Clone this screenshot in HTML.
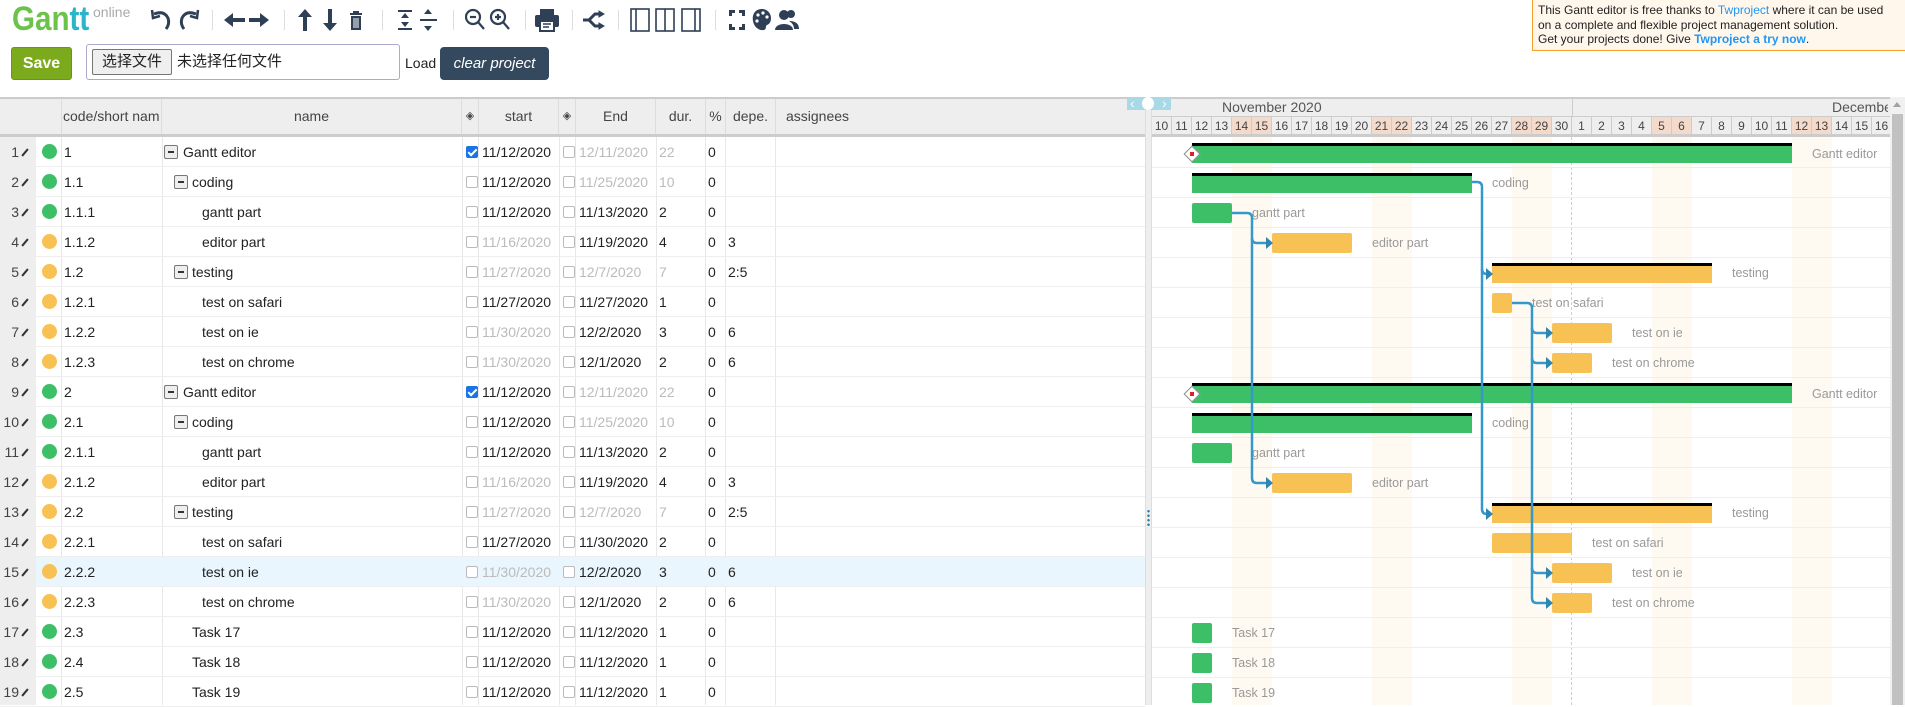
<!DOCTYPE html>
<html><head><meta charset="utf-8">
<style>
*{box-sizing:border-box;margin:0;padding:0}
body{width:1905px;height:705px;overflow:hidden;background:#fff;font-family:"Liberation Sans",Arial,sans-serif;font-size:14px;color:#222;position:relative}
.a{position:absolute}
.ic{position:absolute;top:8px}
.sep{position:absolute;top:10px;width:1px;height:20px;background:#ddd}
.hd{position:absolute;top:97px;height:40px;background:#eee;border-top:2px solid #ccc;border-bottom:3px solid #ccc}
.hc{position:absolute;top:0;height:35px;line-height:35px;color:#444;border-right:1px solid #ddd;text-align:center;white-space:nowrap;overflow:hidden}
.r{position:absolute;left:0;width:1145px;height:30px;border-bottom:1px solid #eee}
.r>span{position:absolute;top:0;line-height:30px;white-space:nowrap}
.n{left:0;width:19px;text-align:right;color:#444}
.pen{position:absolute;left:24px;top:11px;width:2px;height:9px;background:#333;transform:rotate(40deg)}
.dot{position:absolute;left:42px;top:7px;width:15px;height:15px;border-radius:50%}
.g{background:#3dbf67}.o{background:#f8c154}
.vl{position:absolute;top:137px;height:568px;width:1px;background:#e8e8e8}
.cb{position:absolute;top:9px;width:12px;height:12px;border:1px solid #bbb;border-radius:2px;background:#fff}
.cb.on{background:#1a73e8;border-color:#1a73e8}
.cb.on:after{content:"";position:absolute;left:3px;top:0px;width:3px;height:7px;border:solid #fff;border-width:0 2px 2px 0;transform:rotate(45deg)}
.bx{position:absolute;top:8px;width:14px;height:14px;border:1px solid #777;border-radius:2px;background:#eee}
.bx:after{content:"";position:absolute;left:3px;top:5px;width:6px;height:1.5px;background:#333}
.gr{color:#bbb}
.bar{position:absolute;height:20px;border-radius:2px}
.par{position:absolute;height:20px;border-top:3px solid #000}
.lb{position:absolute;color:#999;font-size:12.5px;line-height:20px;white-space:nowrap;margin-top:2px}
.day{position:absolute;top:116px;width:20px;height:18px;border-right:1px solid #ccc;border-top:1px solid #ccc;text-align:center;font-size:12px;line-height:18px;color:#444;background:#eee}
.we{background:#f3dacb}
.stripe{position:absolute;top:137px;width:40px;height:568px;background:#fffaf1}
.gl{position:absolute;left:1152px;width:738px;height:1px;background:#eee}
</style></head><body>

<div class="a" style="left:12px;top:0px;font-size:34px;font-weight:bold;color:#6cc24a;line-height:38px;transform:scaleX(0.87);transform-origin:0 0;white-space:nowrap">Gan<span style="color:#2bb5c8">tt</span></div>
<div class="a" style="left:93px;top:4px;font-size:14px;color:#aaa">online</div>

<svg class="ic" style="left:150px" width="50" height="24" viewBox="0 0 50 24" fill="none" stroke="#2f3f55" stroke-width="3"><path d="M4 6 Q14 2 18 10 Q20 16 16 21"/><path d="M2 2 L3 10 L10 8" stroke-width="2.5"/><path d="M46 6 Q36 2 32 10 Q30 16 34 21"/><path d="M48 2 L47 10 L40 8" stroke-width="2.5"/></svg>
<div class="sep" style="left:212px"></div>
<svg class="ic" style="left:224px" width="46" height="24" viewBox="0 0 46 24" fill="#2f3f55"><path d="M0 12 L9 5 V10 H21 V14 H9 V19Z"/><path d="M45 12 L36 5 V10 H25 V14 H36 V19Z"/></svg>
<div class="sep" style="left:284px"></div>
<svg class="ic" style="left:298px" width="66" height="24" viewBox="0 0 66 24" fill="#2f3f55"><path d="M7 1 L14 9 H9 V23 H5 V9 H0Z"/><path d="M32 23 L25 15 H30 V1 H34 V15 H39Z"/><path d="M52 5 H64 V7 H52Z M55 3 H61 V5 H55Z M53 8 H63 V22 H53Z" /><path d="M56 10 V20 M58 10 V20 M60 10 V20" stroke="#fff" stroke-width="1"/></svg>
<div class="sep" style="left:382px"></div>
<svg class="ic" style="left:398px" width="40" height="24" viewBox="0 0 40 24" fill="#2f3f55"><path d="M0 2 H14 V4 H0Z M0 20 H14 V22 H0Z M7 5 L11 10 H3Z M7 19 L3 14 H11Z"/><path d="M22 11 H39 V13 H22Z M30 1 L26 6 H34 Z M30 23 L26 18 H34Z"/></svg>
<div class="sep" style="left:453px"></div>
<svg class="ic" style="left:465px" width="48" height="26" viewBox="0 0 48 26" fill="none" stroke="#2f3f55" stroke-width="2.2"><circle cx="8" cy="9" r="7"/><path d="M13 14 L19 21"/><path d="M5 9 H11"/><circle cx="33" cy="9" r="7"/><path d="M38 14 L44 21"/><path d="M30 9 H36 M33 6 V12"/></svg>
<div class="sep" style="left:525px"></div>
<svg class="ic" style="left:535px" width="24" height="24" viewBox="0 0 24 24" fill="#2f3f55"><rect x="5" y="1" width="14" height="6"/><rect x="0" y="7" width="24" height="12" rx="2"/><rect x="5" y="13" width="14" height="10" fill="#fff" stroke="#2f3f55" stroke-width="2"/><path d="M8 16 H16 M8 19 H14" stroke="#2f3f55" stroke-width="1.5"/></svg>
<div class="sep" style="left:572px"></div>
<svg class="ic" style="left:583px" width="22" height="24" viewBox="0 0 22 24" fill="none" stroke="#2f3f55" stroke-width="3"><path d="M0 12 H6 L12 6 H18 M6 12 L12 18 H18"/><path d="M16 3 L21 6 L16 9Z M16 15 L21 18 L16 21Z" fill="#2f3f55" stroke-width="1"/></svg>
<div class="sep" style="left:618px"></div>
<svg class="ic" style="left:630px" width="72" height="24" viewBox="0 0 72 24" fill="none" stroke="#2f3f55" stroke-width="1.6"><rect x="1" y="1" width="18" height="22"/><path d="M6 1 V23"/><rect x="26" y="1" width="18" height="22"/><path d="M35 1 V23"/><rect x="52" y="1" width="18" height="22"/><path d="M65 1 V23"/></svg>
<div class="sep" style="left:715px"></div>
<svg class="ic" style="left:728px" width="72" height="24" viewBox="0 0 72 24" fill="#2f3f55"><path d="M1 2 H7 V5 H4 V8 H1Z M17 2 H11 V5 H14 V8 H17Z M1 22 H7 V19 H4 V16 H1Z M17 22 H11 V19 H14 V16 H17Z"/><path d="M34 1 C26 1 24 8 25 13 C26 19 31 23 36 22 C39 21 37 18 39 17 C42 16 43 13 43 10 C43 5 39 1 34 1Z"/><circle cx="30" cy="7" r="1.6" fill="#fff"/><circle cx="35" cy="5" r="1.6" fill="#fff"/><circle cx="39" cy="9" r="1.6" fill="#fff"/><circle cx="29" cy="13" r="1.6" fill="#fff"/><circle cx="56" cy="7" r="5"/><path d="M47 22 C47 14 65 14 65 22Z"/><circle cx="63" cy="6" r="4"/><path d="M61 13 C68 13 71 16 71 21 H66 C66 17 64 15 61 13Z"/></svg>

<div class="a" style="left:1532px;top:0;width:373px;height:51px;background:#fff7ec;border-left:1px solid #f7a12a;border-bottom:1px solid #f7a12a;padding:3px 0 0 5px;font-size:12px;line-height:14.5px;color:#222;white-space:nowrap">This Gantt editor is free thanks to <span style="color:#2196f3">Twproject</span> where it can be used<br>on a complete and flexible project management solution.<br>Get your projects done! Give <b style="color:#2196f3">Twproject a try now</b>.</div>

<div class="a" style="left:11px;top:47px;width:61px;height:33px;background:#7bab1d;border:1px solid #6a9618;border-radius:3px;color:#fff;font-weight:bold;font-size:16px;text-align:center;line-height:31px">Save</div>
<div class="a" style="left:86px;top:44px;width:314px;height:36px;border:1px solid #aac;border-radius:3px"></div>
<div class="a" style="left:92px;top:49px;width:80px;height:26px;background:#efefef;border:1px solid #767676;border-radius:2px;font-family:'Liberation Sans','Noto Sans CJK SC',sans-serif;font-size:15px;line-height:24px;text-align:center">选择文件</div>
<div class="a" style="left:177px;top:49px;font-family:'Liberation Sans','Noto Sans CJK SC',sans-serif;font-size:15px;line-height:26px">未选择任何文件</div>
<div class="a" style="left:405px;top:53px;font-size:14px;line-height:20px">Load</div>
<div class="a" style="left:440px;top:47px;width:109px;height:33px;background:#34495e;border-radius:4px;color:#fff;font-style:italic;font-size:15px;text-align:center;line-height:33px">clear project</div>

<div class="hd" style="left:0;width:1145px">
<div class="hc" style="left:0;width:62px"></div>
<div class="hc" style="left:62px;width:100px;text-align:left;padding-left:1px">code/short nam</div>
<div class="hc" style="left:162px;width:300px">name</div>
<div class="hc" style="left:462px;width:17px;font-size:11px">◈</div>
<div class="hc" style="left:479px;width:80px">start</div>
<div class="hc" style="left:559px;width:17px;font-size:11px">◈</div>
<div class="hc" style="left:576px;width:80px">End</div>
<div class="hc" style="left:656px;width:50px">dur.</div>
<div class="hc" style="left:706px;width:20px">%</div>
<div class="hc" style="left:726px;width:50px">depe.</div>
<div class="hc" style="left:776px;width:369px;text-align:left;padding-left:10px;border:none">assignees</div>
</div>

<div class="a" style="left:0;top:137px;width:36px;height:568px;background:#eee"></div>
<div class="vl" style="left:61px"></div><div class="vl" style="left:162px"></div><div class="vl" style="left:462px"></div><div class="vl" style="left:478px"></div><div class="vl" style="left:559px"></div><div class="vl" style="left:575px"></div><div class="vl" style="left:656px"></div><div class="vl" style="left:705px"></div><div class="vl" style="left:725px"></div><div class="vl" style="left:775px"></div>

<div class="a" style="left:36px;top:557px;width:1109px;height:30px;background:#e9f6fd"></div>

<div class="r" style="top:137px"><span class="n">1</span><i class="pen"></i><i class="dot g"></i><span style="left:64px">1</span><i class="bx" style="left:164px"></i><span style="left:183px">Gantt editor</span><i class="cb on" style="left:466px"></i><span style="left:482px">11/12/2020</span><i class="cb" style="left:563px"></i><span class="gr" style="left:579px">12/11/2020</span><span class="gr" style="left:659px">22</span><span style="left:708px">0</span></div>
<div class="r" style="top:167px"><span class="n">2</span><i class="pen"></i><i class="dot g"></i><span style="left:64px">1.1</span><i class="bx" style="left:174px"></i><span style="left:192px">coding</span><i class="cb" style="left:466px"></i><span style="left:482px">11/12/2020</span><i class="cb" style="left:563px"></i><span class="gr" style="left:579px">11/25/2020</span><span class="gr" style="left:659px">10</span><span style="left:708px">0</span></div>
<div class="r" style="top:197px"><span class="n">3</span><i class="pen"></i><i class="dot g"></i><span style="left:64px">1.1.1</span><span style="left:202px">gantt part</span><i class="cb" style="left:466px"></i><span style="left:482px">11/12/2020</span><i class="cb" style="left:563px"></i><span style="left:579px">11/13/2020</span><span style="left:659px">2</span><span style="left:708px">0</span></div>
<div class="r" style="top:227px"><span class="n">4</span><i class="pen"></i><i class="dot o"></i><span style="left:64px">1.1.2</span><span style="left:202px">editor part</span><i class="cb" style="left:466px"></i><span class="gr" style="left:482px">11/16/2020</span><i class="cb" style="left:563px"></i><span style="left:579px">11/19/2020</span><span style="left:659px">4</span><span style="left:708px">0</span><span style="left:728px">3</span></div>
<div class="r" style="top:257px"><span class="n">5</span><i class="pen"></i><i class="dot o"></i><span style="left:64px">1.2</span><i class="bx" style="left:174px"></i><span style="left:192px">testing</span><i class="cb" style="left:466px"></i><span class="gr" style="left:482px">11/27/2020</span><i class="cb" style="left:563px"></i><span class="gr" style="left:579px">12/7/2020</span><span class="gr" style="left:659px">7</span><span style="left:708px">0</span><span style="left:728px">2:5</span></div>
<div class="r" style="top:287px"><span class="n">6</span><i class="pen"></i><i class="dot o"></i><span style="left:64px">1.2.1</span><span style="left:202px">test on safari</span><i class="cb" style="left:466px"></i><span style="left:482px">11/27/2020</span><i class="cb" style="left:563px"></i><span style="left:579px">11/27/2020</span><span style="left:659px">1</span><span style="left:708px">0</span></div>
<div class="r" style="top:317px"><span class="n">7</span><i class="pen"></i><i class="dot o"></i><span style="left:64px">1.2.2</span><span style="left:202px">test on ie</span><i class="cb" style="left:466px"></i><span class="gr" style="left:482px">11/30/2020</span><i class="cb" style="left:563px"></i><span style="left:579px">12/2/2020</span><span style="left:659px">3</span><span style="left:708px">0</span><span style="left:728px">6</span></div>
<div class="r" style="top:347px"><span class="n">8</span><i class="pen"></i><i class="dot o"></i><span style="left:64px">1.2.3</span><span style="left:202px">test on chrome</span><i class="cb" style="left:466px"></i><span class="gr" style="left:482px">11/30/2020</span><i class="cb" style="left:563px"></i><span style="left:579px">12/1/2020</span><span style="left:659px">2</span><span style="left:708px">0</span><span style="left:728px">6</span></div>
<div class="r" style="top:377px"><span class="n">9</span><i class="pen"></i><i class="dot g"></i><span style="left:64px">2</span><i class="bx" style="left:164px"></i><span style="left:183px">Gantt editor</span><i class="cb on" style="left:466px"></i><span style="left:482px">11/12/2020</span><i class="cb" style="left:563px"></i><span class="gr" style="left:579px">12/11/2020</span><span class="gr" style="left:659px">22</span><span style="left:708px">0</span></div>
<div class="r" style="top:407px"><span class="n">10</span><i class="pen"></i><i class="dot g"></i><span style="left:64px">2.1</span><i class="bx" style="left:174px"></i><span style="left:192px">coding</span><i class="cb" style="left:466px"></i><span style="left:482px">11/12/2020</span><i class="cb" style="left:563px"></i><span class="gr" style="left:579px">11/25/2020</span><span class="gr" style="left:659px">10</span><span style="left:708px">0</span></div>
<div class="r" style="top:437px"><span class="n">11</span><i class="pen"></i><i class="dot g"></i><span style="left:64px">2.1.1</span><span style="left:202px">gantt part</span><i class="cb" style="left:466px"></i><span style="left:482px">11/12/2020</span><i class="cb" style="left:563px"></i><span style="left:579px">11/13/2020</span><span style="left:659px">2</span><span style="left:708px">0</span></div>
<div class="r" style="top:467px"><span class="n">12</span><i class="pen"></i><i class="dot o"></i><span style="left:64px">2.1.2</span><span style="left:202px">editor part</span><i class="cb" style="left:466px"></i><span class="gr" style="left:482px">11/16/2020</span><i class="cb" style="left:563px"></i><span style="left:579px">11/19/2020</span><span style="left:659px">4</span><span style="left:708px">0</span><span style="left:728px">3</span></div>
<div class="r" style="top:497px"><span class="n">13</span><i class="pen"></i><i class="dot o"></i><span style="left:64px">2.2</span><i class="bx" style="left:174px"></i><span style="left:192px">testing</span><i class="cb" style="left:466px"></i><span class="gr" style="left:482px">11/27/2020</span><i class="cb" style="left:563px"></i><span class="gr" style="left:579px">12/7/2020</span><span class="gr" style="left:659px">7</span><span style="left:708px">0</span><span style="left:728px">2:5</span></div>
<div class="r" style="top:527px"><span class="n">14</span><i class="pen"></i><i class="dot o"></i><span style="left:64px">2.2.1</span><span style="left:202px">test on safari</span><i class="cb" style="left:466px"></i><span style="left:482px">11/27/2020</span><i class="cb" style="left:563px"></i><span style="left:579px">11/30/2020</span><span style="left:659px">2</span><span style="left:708px">0</span></div>
<div class="r" style="top:557px"><span class="n">15</span><i class="pen"></i><i class="dot o"></i><span style="left:64px">2.2.2</span><span style="left:202px">test on ie</span><i class="cb" style="left:466px"></i><span class="gr" style="left:482px">11/30/2020</span><i class="cb" style="left:563px"></i><span style="left:579px">12/2/2020</span><span style="left:659px">3</span><span style="left:708px">0</span><span style="left:728px">6</span></div>
<div class="r" style="top:587px"><span class="n">16</span><i class="pen"></i><i class="dot o"></i><span style="left:64px">2.2.3</span><span style="left:202px">test on chrome</span><i class="cb" style="left:466px"></i><span class="gr" style="left:482px">11/30/2020</span><i class="cb" style="left:563px"></i><span style="left:579px">12/1/2020</span><span style="left:659px">2</span><span style="left:708px">0</span><span style="left:728px">6</span></div>
<div class="r" style="top:617px"><span class="n">17</span><i class="pen"></i><i class="dot g"></i><span style="left:64px">2.3</span><span style="left:192px">Task 17</span><i class="cb" style="left:466px"></i><span style="left:482px">11/12/2020</span><i class="cb" style="left:563px"></i><span style="left:579px">11/12/2020</span><span style="left:659px">1</span><span style="left:708px">0</span></div>
<div class="r" style="top:647px"><span class="n">18</span><i class="pen"></i><i class="dot g"></i><span style="left:64px">2.4</span><span style="left:192px">Task 18</span><i class="cb" style="left:466px"></i><span style="left:482px">11/12/2020</span><i class="cb" style="left:563px"></i><span style="left:579px">11/12/2020</span><span style="left:659px">1</span><span style="left:708px">0</span></div>
<div class="r" style="top:677px"><span class="n">19</span><i class="pen"></i><i class="dot g"></i><span style="left:64px">2.5</span><span style="left:192px">Task 19</span><i class="cb" style="left:466px"></i><span style="left:482px">11/12/2020</span><i class="cb" style="left:563px"></i><span style="left:579px">11/12/2020</span><span style="left:659px">1</span><span style="left:708px">0</span></div>

<div class="a" style="left:1145px;top:97px;width:7px;height:608px;background:#eee;border-left:1px solid #ddd;border-right:1px solid #ddd"></div>
<div class="a" style="left:1147px;top:509px;width:3px;height:18px;background:radial-gradient(circle,#2a7fa5 1px,transparent 1.5px) 0 0/3px 4.5px"></div>

<div class="a" style="left:1152px;top:97px;width:738px;height:40px;background:#eee;border-top:2px solid #ccc;border-bottom:3px solid #ccc"></div>
<div class="a" style="left:1572px;top:99px;width:1px;height:17px;background:#ccc"></div>
<div class="a" style="left:1222px;top:98px;font-size:14px;color:#555;line-height:18px">November 2020</div>
<div class="a" style="left:1832px;top:98px;font-size:14px;color:#555;line-height:18px;width:56px;overflow:hidden;white-space:nowrap">December</div>
<div class="day" style="left:1152px">10</div><div class="day" style="left:1172px">11</div><div class="day" style="left:1192px">12</div><div class="day" style="left:1212px">13</div><div class="day we" style="left:1232px">14</div><div class="day we" style="left:1252px">15</div><div class="day" style="left:1272px">16</div><div class="day" style="left:1292px">17</div><div class="day" style="left:1312px">18</div><div class="day" style="left:1332px">19</div><div class="day" style="left:1352px">20</div><div class="day we" style="left:1372px">21</div><div class="day we" style="left:1392px">22</div><div class="day" style="left:1412px">23</div><div class="day" style="left:1432px">24</div><div class="day" style="left:1452px">25</div><div class="day" style="left:1472px">26</div><div class="day" style="left:1492px">27</div><div class="day we" style="left:1512px">28</div><div class="day we" style="left:1532px">29</div><div class="day" style="left:1552px">30</div><div class="day" style="left:1572px">1</div><div class="day" style="left:1592px">2</div><div class="day" style="left:1612px">3</div><div class="day" style="left:1632px">4</div><div class="day we" style="left:1652px">5</div><div class="day we" style="left:1672px">6</div><div class="day" style="left:1692px">7</div><div class="day" style="left:1712px">8</div><div class="day" style="left:1732px">9</div><div class="day" style="left:1752px">10</div><div class="day" style="left:1772px">11</div><div class="day we" style="left:1792px">12</div><div class="day we" style="left:1812px">13</div><div class="day" style="left:1832px">14</div><div class="day" style="left:1852px">15</div><div class="day" style="left:1872px">16</div>

<div class="a" style="left:1127px;top:97px;width:44px;height:13px;background:#a9d8e6"></div>
<div class="a" style="left:1130px;top:95px;color:#fff;font-size:14px;line-height:16px">‹</div>
<div class="a" style="left:1162px;top:95px;color:#fff;font-size:14px;line-height:16px">›</div>
<div class="a" style="left:1142px;top:97px;width:12px;height:13px;border-radius:50%;background:#fff"></div>

<div class="stripe" style="left:1232px"></div><div class="stripe" style="left:1372px"></div><div class="stripe" style="left:1512px"></div><div class="stripe" style="left:1652px"></div><div class="stripe" style="left:1792px"></div>
<div class="a" style="left:1571px;top:137px;height:568px;border-left:1px dashed #ccc"></div>
<div class="gl" style="top:167px"></div><div class="gl" style="top:197px"></div><div class="gl" style="top:227px"></div><div class="gl" style="top:257px"></div><div class="gl" style="top:287px"></div><div class="gl" style="top:317px"></div><div class="gl" style="top:347px"></div><div class="gl" style="top:377px"></div><div class="gl" style="top:407px"></div><div class="gl" style="top:437px"></div><div class="gl" style="top:467px"></div><div class="gl" style="top:497px"></div><div class="gl" style="top:527px"></div><div class="gl" style="top:557px"></div><div class="gl" style="top:587px"></div><div class="gl" style="top:617px"></div><div class="gl" style="top:647px"></div><div class="gl" style="top:677px"></div>

<div class="par g" style="left:1192px;top:143px;width:600px"></div><div class="lb" style="left:1812px;top:142px">Gantt editor</div>
<div class="par g" style="left:1192px;top:173px;width:280px"></div><div class="lb" style="left:1492px;top:171px">coding</div>
<div class="bar g" style="left:1192px;top:203px;width:40px"></div><div class="lb" style="left:1252px;top:201px">gantt part</div>
<div class="bar o" style="left:1272px;top:233px;width:80px"></div><div class="lb" style="left:1372px;top:231px">editor part</div>
<div class="par o" style="left:1492px;top:263px;width:220px"></div><div class="lb" style="left:1732px;top:261px">testing</div>
<div class="bar o" style="left:1492px;top:293px;width:20px"></div><div class="lb" style="left:1532px;top:291px">test on safari</div>
<div class="bar o" style="left:1552px;top:323px;width:60px"></div><div class="lb" style="left:1632px;top:321px">test on ie</div>
<div class="bar o" style="left:1552px;top:353px;width:40px"></div><div class="lb" style="left:1612px;top:351px">test on chrome</div>
<div class="par g" style="left:1192px;top:383px;width:600px"></div><div class="lb" style="left:1812px;top:382px">Gantt editor</div>
<div class="par g" style="left:1192px;top:413px;width:280px"></div><div class="lb" style="left:1492px;top:411px">coding</div>
<div class="bar g" style="left:1192px;top:443px;width:40px"></div><div class="lb" style="left:1252px;top:441px">gantt part</div>
<div class="bar o" style="left:1272px;top:473px;width:80px"></div><div class="lb" style="left:1372px;top:471px">editor part</div>
<div class="par o" style="left:1492px;top:503px;width:220px"></div><div class="lb" style="left:1732px;top:501px">testing</div>
<div class="bar o" style="left:1492px;top:533px;width:80px"></div><div class="lb" style="left:1592px;top:531px">test on safari</div>
<div class="bar o" style="left:1552px;top:563px;width:60px"></div><div class="lb" style="left:1632px;top:561px">test on ie</div>
<div class="bar o" style="left:1552px;top:593px;width:40px"></div><div class="lb" style="left:1612px;top:591px">test on chrome</div>
<div class="bar g" style="left:1192px;top:623px;width:20px"></div><div class="lb" style="left:1232px;top:621px">Task 17</div>
<div class="bar g" style="left:1192px;top:653px;width:20px"></div><div class="lb" style="left:1232px;top:651px">Task 18</div>
<div class="bar g" style="left:1192px;top:683px;width:20px"></div><div class="lb" style="left:1232px;top:681px">Task 19</div>

<div class="a" style="left:1186px;top:148px;width:12px;height:12px;background:#fff;border:1px solid #888;transform:rotate(45deg)"></div>
<div class="a" style="left:1190px;top:152px;width:4px;height:4px;background:#d22"></div>
<div class="a" style="left:1186px;top:388px;width:12px;height:12px;background:#fff;border:1px solid #888;transform:rotate(45deg)"></div>
<div class="a" style="left:1190px;top:392px;width:4px;height:4px;background:#d22"></div>

<svg class="a" style="left:0;top:0" width="1905" height="705" fill="none" stroke="#3598cb" stroke-width="2.5">
<path d="M1232 213 H1247 Q1252 213 1252 218 V478 Q1252 483 1257 483 H1267"/>
<path d="M1252 238 Q1252 243 1257 243 H1267"/>
<path d="M1472 182 H1477 Q1482 182 1482 187 V509 Q1482 514 1487 514 H1487"/>
<path d="M1482 269 Q1482 274 1487 274"/>
<path d="M1512 303 H1527 Q1532 303 1532 308 V598 Q1532 603 1537 603 H1547"/>
<path d="M1532 328 Q1532 333 1537 333 H1547 M1532 358 Q1532 363 1537 363 H1547 M1532 568 Q1532 573 1537 573 H1547"/>
<g fill="#2f86b3" stroke="none">
<path d="M1266 237 L1273 243 L1266 249Z"/><path d="M1266 477 L1273 483 L1266 489Z"/>
<path d="M1486 268 L1493 274 L1486 280Z"/><path d="M1486 508 L1493 514 L1486 520Z"/>
<path d="M1546 327 L1553 333 L1546 339Z"/><path d="M1546 357 L1553 363 L1546 369Z"/><path d="M1546 567 L1553 573 L1546 579Z"/><path d="M1546 597 L1553 603 L1546 609Z"/>
</g></svg>

<div class="a" style="left:1890px;top:97px;width:15px;height:608px;background:#f1f1f1"></div>
<div class="a" style="left:1893px;top:102px;width:0;height:0;border-left:4px solid transparent;border-right:4px solid transparent;border-bottom:5px solid #a3a3a3"></div>
<div class="a" style="left:1892px;top:114px;width:11px;height:591px;background:#c1c1c1"></div>
</body></html>
